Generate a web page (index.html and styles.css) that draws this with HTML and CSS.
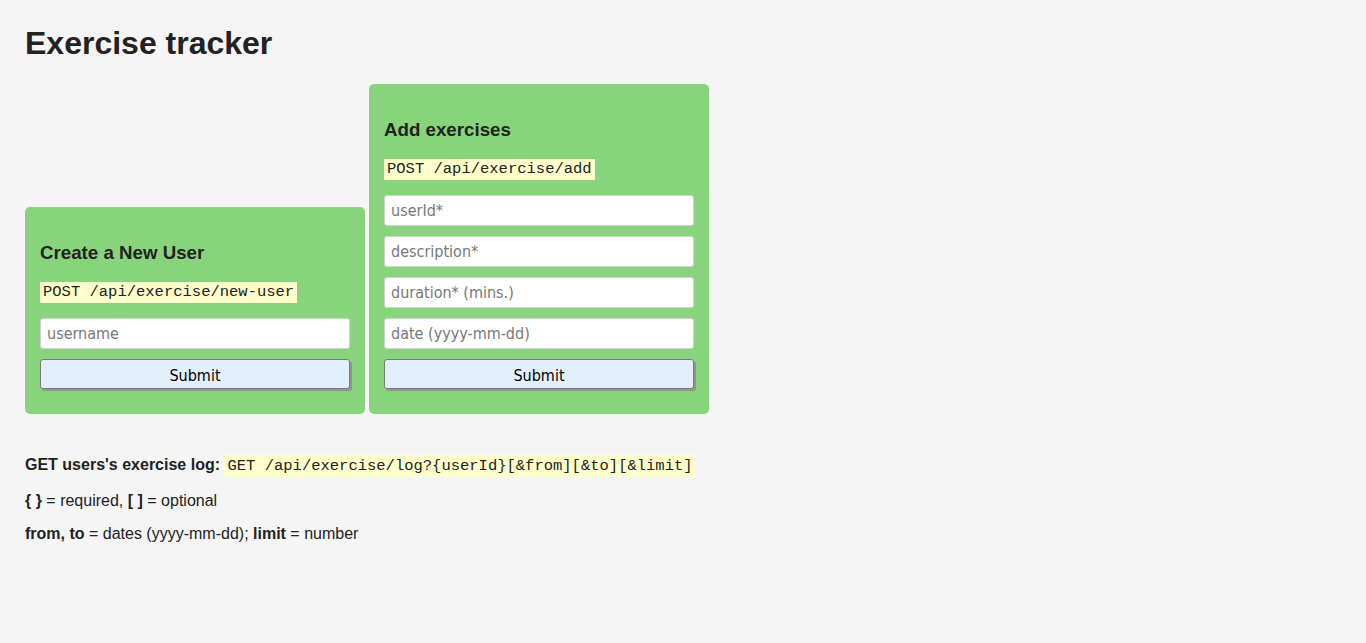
FILE: index.html
```html
<!DOCTYPE html>
<html lang="en">
<head>
<meta charset="utf-8">
<title>Exercise Tracker</title>
<link rel="stylesheet" href="styles.css">
</head>
<body>
<div class="page">
  <h1 class="title">Exercise tracker</h1>
  <div class="forms">
    <form class="card">
      <h3 class="card-title">Create a New User</h3>
      <div class="endpoint"><code class="route">POST /api/exercise/new-user</code></div>
      <input class="field" type="text" placeholder="username">
      <button class="submit" type="button">Submit</button>
    </form>
    <form class="card">
      <h3 class="card-title">Add exercises</h3>
      <div class="endpoint"><code class="route">POST /api/exercise/add</code></div>
      <input class="field" type="text" placeholder="userId*">
      <input class="field" type="text" placeholder="description*">
      <input class="field" type="text" placeholder="duration* (mins.)">
      <input class="field" type="text" placeholder="date (yyyy-mm-dd)">
      <button class="submit" type="button">Submit</button>
    </form>
  </div>
  <p class="note note-first"><b>GET users's exercise log:</b> <code class="route inline">GET /api/exercise/log?{userId}[&amp;from][&amp;to][&amp;limit]</code></p>
  <p class="note"><b>{ }</b> = required, <b>[ ]</b> = optional</p>
  <p class="note"><b>from, to</b> = dates (yyyy-mm-dd); <b>limit</b> = number</p>
</div>
</body>
</html>
```

FILE: styles.css
```css
html, body {
  margin: 0;
  padding: 0;
}

body {
  background: #f5f5f5;
  color: #222;
  font-family: "Liberation Sans", Arial, sans-serif;
  font-size: 16px;
}

.page {
  padding: 25px 25px;
}

.title {
  margin: 0 0 22px;
  font-size: 32px;
  line-height: 37px;
  font-weight: bold;
}

.forms {
  display: flex;
  align-items: flex-end;
  gap: 4px;
  margin-bottom: 42px;
}

.card {
  box-sizing: border-box;
  width: 340px;
  display: flex;
  flex-direction: column;
  padding: 16px 15px 15px;
  background: #88d47c;
  border-radius: 5px;
  margin: 0;
}

.card-title {
  margin: 19px 0 18.5px;
  font-size: 18.72px;
  line-height: 21.5px;
  font-weight: bold;
}

.endpoint {
  display: flex;
  margin: 0 0 15px;
}

.route {
  font-family: "Liberation Mono", "Courier New", monospace;
  font-size: 15.5px;
  background: #ffffcc;
  color: #222;
  padding: 2px 3px;
}

.endpoint .route {
  display: block;
  line-height: 17px;
}

.field {
  box-sizing: border-box;
  width: 100%;
  height: 31px;
  margin: 0 0 10px;
  padding: 0 6px;
  border: 1px solid #d2d2d2;
  border-radius: 3px;
  background: #fff;
  font-family: "DejaVu Sans Condensed", "DejaVu Sans", sans-serif;
  font-stretch: condensed;
  font-size: 16px;
  color: #222;
  outline: none;
}

.field::placeholder {
  color: #777;
}

.submit {
  box-sizing: border-box;
  width: 100%;
  height: 30px;
  margin: 0 0 10px;
  padding: 2px 0 0;
  border: 1px solid #7a7a7a;
  border-radius: 3px;
  background: #e2effc;
  box-shadow: 2px 2px 0 #939393;
  font-family: "DejaVu Sans Condensed", "DejaVu Sans", sans-serif;
  font-stretch: condensed;
  font-size: 16px;
  color: #000;
}

.note {
  margin: 0 0 15px;
  line-height: 18.4px;
}

.note-first {
  margin-bottom: 16.6px;
}
```
